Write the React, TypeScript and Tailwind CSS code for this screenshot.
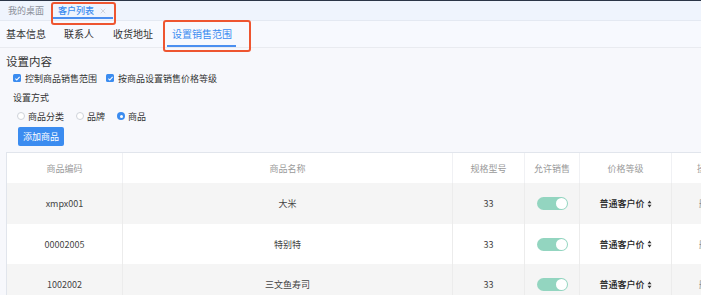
import { X } from 'lucide-react';

const rows = [
  { code: 'xmpx001', name: '大米', spec: '33', price: '普通客户价', h: 'h-[41px]', bg: 'bg-[#f5f5f5]' },
  { code: '00002005', name: '特别特', spec: '33', price: '普通客户价', h: 'h-[40px]', bg: 'bg-white' },
  { code: '1002002', name: '三文鱼寿司', spec: '33', price: '普通客户价', h: 'h-[41px]', bg: 'bg-[#f5f5f5]' },
];

const font = { fontFamily: '"Noto Sans CJK SC", "Noto Sans", sans-serif' };

function Checkbox({ label }: { label: string }) {
  return (
    <label className="flex items-center gap-[4px]">
      <span className="flex h-[8px] w-[8px] items-center justify-center rounded-[1.5px] bg-[#3b8cf0]">
        <svg viewBox="0 0 10 10" className="h-[7px] w-[7px]">
          <path d="M2 5.2l2 2 4-4.4" fill="none" stroke="white" strokeWidth="1.6" />
        </svg>
      </span>
      <span className="text-[9px] leading-none text-[#333]">{label}</span>
    </label>
  );
}

function Radio({ label, checked }: { label: string; checked?: boolean }) {
  return (
    <label className="flex items-center gap-[3px]">
      {checked ? (
        <span className="flex h-[8px] w-[8px] items-center justify-center rounded-full bg-[#3b8cf0]">
          <span className="h-[3px] w-[3px] rounded-full bg-white" />
        </span>
      ) : (
        <span className="h-[8px] w-[8px] rounded-full border border-[#cfd3da] bg-white" />
      )}
      <span className="text-[9px] leading-none text-[#333]">{label}</span>
    </label>
  );
}

function Toggle() {
  return (
    <span className="flex h-[13px] w-[31px] items-center justify-end rounded-full bg-[#93d5c0] pr-[1px]">
      <span className="h-[11px] w-[11px] rounded-full bg-white" />
    </span>
  );
}

function SortIcon() {
  return (
    <svg viewBox="0 0 6 10" className="h-[8px] w-[5px]">
      <path d="M3 0.5L5.5 4H0.5z" fill="#333" />
      <path d="M3 9.5L5.5 6H0.5z" fill="#333" />
    </svg>
  );
}

export default function App() {
  return (
    <div className="relative h-[295px] w-[701px] overflow-hidden bg-[#f7f8fc]" style={font}>
      <div className="h-[1px] bg-[#2b3547]" />

      {/* window tabs */}
      <div className="flex h-[20px] items-center border-b border-[#e4e9f2] bg-[#eff4fd] pl-[8px]">
        <span className="text-[9px] leading-none text-[#8a8f99]">我的桌面</span>
        <div className="relative ml-[9px] flex h-full items-center gap-[5px] pl-[5px] pr-[6px]">
          <span className="text-[9px] font-medium leading-none text-[#3b8cf0]">客户列表</span>
          <X className="h-[8px] w-[8px] text-[#b0b4bb]" strokeWidth={1.5} />
          <span className="absolute bottom-[1px] left-0 right-0 h-[2px] bg-[#4b8ff0]" />
        </div>
      </div>

      {/* section tabs */}
      <div className="flex h-[27px] items-center border-b border-[#e9ebf0] bg-[#f7f9fe] pl-[6px] text-[10px] leading-none text-[#333]">
        <span>基本信息</span>
        <span className="ml-[18px]">联系人</span>
        <span className="ml-[19px]">收货地址</span>
        <div className="relative ml-[14px] flex h-full items-center pl-[5px] pr-[4px] text-[#3b8cf0]">
          设置销售范围
          <span className="absolute bottom-[0px] left-0 right-0 h-[2px] bg-[#4b8ff0]" />
        </div>
      </div>

      {/* settings */}
      <div className="pl-[6px] pt-[7px]">
        <div className="flex h-[14px] items-center text-[11.5px] leading-none text-[#333]">设置内容</div>
        <div className="mt-[2px] flex h-[14px] items-center gap-[9px] pl-[7px]">
          <Checkbox label="控制商品销售范围" />
          <Checkbox label="按商品设置销售价格等级" />
        </div>
        <div className="mt-[5px] flex h-[14px] items-center pl-[7px] text-[9px] leading-none text-[#333]">设置方式</div>
        <div className="mt-[5px] flex h-[14px] items-center gap-[12px] pl-[11px]">
          <Radio label="商品分类" />
          <Radio label="品牌" />
          <Radio label="商品" checked />
        </div>
        <button className="ml-[12px] mt-[4px] flex h-[19px] w-[46px] items-center justify-center rounded-[2px] bg-[#3b8cf0] text-[9px] leading-none text-white">
          添加商品
        </button>
      </div>

      {/* table */}
      <div className="ml-[6px] mt-[6px] w-[760px] border-l border-t border-[#e1e5ec] bg-white">
        <div className="grid grid-cols-[116px_330px_72px_55px_92px_95px] text-[9px] leading-none">
          {['商品编码', '商品名称', '规格型号', '允许销售', '价格等级'].map((h) => (
            <div key={h} className="flex h-[30px] items-center justify-center border-r border-[#f0f1f4] text-[#9a9a9a]">
              {h}
            </div>
          ))}
          <div className="flex h-[30px] items-center pl-[25px] text-[#9a9a9a]">操作</div>
          {rows.map((r, i) => {
            const cell = `flex ${r.h} items-center justify-center border-r border-[#ececec] ${r.bg}`;
            return [
              <div key={`${i}a`} className={`${cell} text-[#444]`}>{r.code}</div>,
              <div key={`${i}b`} className={`${cell} text-[#444]`}>{r.name}</div>,
              <div key={`${i}c`} className={`${cell} text-[#444]`}>{r.spec}</div>,
              <div key={`${i}d`} className={cell}><Toggle /></div>,
              <div key={`${i}e`} className={`${cell} gap-[2px] font-medium text-[#222]`}>
                {r.price}
                <SortIcon />
              </div>,
              <div key={`${i}f`} className={`flex ${r.h} items-center pl-[27px] text-[#888] ${r.bg}`}>删除</div>,
            ];
          })}
        </div>
      </div>

      {/* annotation boxes */}
      <div className="absolute left-[51px] top-[2px] h-[23px] w-[65px] rounded-[3px] border-2 border-[#ee5530]" />
      <div className="absolute left-[163px] top-[20px] h-[32px] w-[88px] rounded-[3px] border-2 border-[#ee5530]" />
    </div>
  );
}
